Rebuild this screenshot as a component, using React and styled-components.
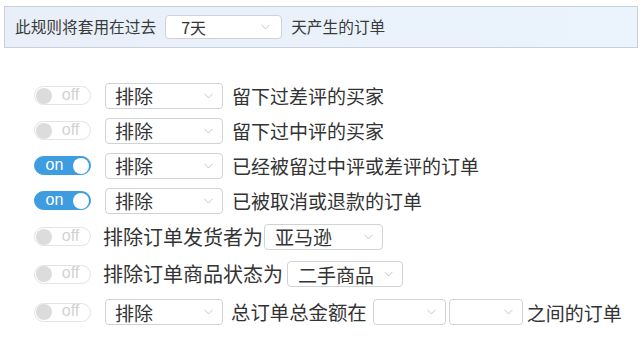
import styled, { createGlobalStyle } from "styled-components";

const GlobalStyle = createGlobalStyle`
  body {
    margin: 0;
    background: #fff;
    font-family: "Noto Sans CJK SC", "Noto Sans", sans-serif;
    color: #333;
  }
`;

const Page = styled.div`
  width: 644px;
  height: 345px;
  padding-top: 6px;
  box-sizing: border-box;
  overflow: hidden;
`;

const Header = styled.div`
  margin-left: 4px;
  width: 634px;
  height: 42px;
  box-sizing: border-box;
  border: 1px solid #c9d0d9;
  background: linear-gradient(to right, #e8eff8, #ebf3fc);
  display: flex;
  align-items: center;
  padding-left: 10px;
  font-size: 15.7px;
  color: #3a3a3a;
`;

const HeaderText = styled.span`
  line-height: 1;
`;

const Select = styled.div`
  position: relative;
  width: ${(p) => p.$w}px;
  height: ${(p) => p.$h || 26}px;
  box-sizing: border-box;
  border: 1px solid #cfd3d8;
  border-radius: 4px;
  background: #fff;
  display: flex;
  align-items: center;
  padding-left: ${(p) => p.$pl || 9}px;
  margin-left: ${(p) => p.$ml || 0}px;
  margin-right: ${(p) => p.$mr || 0}px;
  font-size: ${(p) => p.$fs || 19}px;
  color: #333;
  flex-shrink: 0;
  line-height: 1;
`;

const Chevron = styled.svg`
  position: absolute;
  right: ${(p) => p.$r || 9}px;
  top: 50%;
  margin-top: -3px;
  width: 9px;
  height: 6px;
`;

const List = styled.div`
  padding-top: 30px;
  padding-left: 34px;
`;

const Row = styled.div`
  height: ${(p) => p.$h}px;
  display: flex;
  align-items: center;
  color: #333;
`;

const Label = styled.span`
  line-height: 1;
  white-space: nowrap;
  font-size: ${(p) => p.$fs || 19}px;
  margin-right: ${(p) => p.$mr || 0}px;
`;

const Toggle = styled.div`
  width: 57px;
  height: 19px;
  box-sizing: border-box;
  border-radius: 10px;
  border: 1px solid ${(p) => (p.$on ? "#3e9de0" : "#e4e4e4")};
  background: ${(p) => (p.$on ? "#3e9de0" : "#fff")};
  display: flex;
  align-items: center;
  flex-direction: ${(p) => (p.$on ? "row-reverse" : "row")};
  padding: 0 1px;
  margin-right: ${(p) => p.$mr}px;
  flex-shrink: 0;
`;

const Knob = styled.div`
  width: 16px;
  height: 16px;
  border-radius: 50%;
  background: ${(p) => (p.$on ? "#fff" : "#dcdcdc")};
`;

const ToggleText = styled.span`
  flex: 1;
  text-align: center;
  font-family: "Liberation Sans", Arial, sans-serif;
  font-size: 16px;
  line-height: 1;
  color: ${(p) => (p.$on ? "#fff" : "#d2d2d2")};
  margin-top: -2px;
`;

const Arrow = ({ r }) => (
  <Chevron $r={r} viewBox="0 0 9 6">
    <path d="M0.5 0.8 L4.5 5 L8.5 0.8" fill="none" stroke="#c4c8cc" strokeWidth="1" />
  </Chevron>
);

const Dropdown = ({ value, w, ml, mr, h, fs, pl, r }) => (
  <Select $w={w} $ml={ml} $mr={mr} $h={h} $fs={fs} $pl={pl}>
    {value}
    <Arrow r={r} />
  </Select>
);

const Switch = ({ on, mr = 14 }) => (
  <Toggle $on={on} $mr={mr}>
    <Knob $on={on} />
    <ToggleText $on={on}>{on ? "on" : "off"}</ToggleText>
  </Toggle>
);

const rules = [
  { on: false, text: "留下过差评的买家", h: 35 },
  { on: false, text: "留下过中评的买家", h: 35 },
  { on: true, text: "已经被留过中评或差评的订单", h: 35 },
  { on: true, text: "已被取消或退款的订单", h: 35 },
];

export default function App() {
  return (
    <Page>
      <GlobalStyle />
      <Header>
        <HeaderText>此规则将套用在过去</HeaderText>
        <Dropdown value="7天" w={117} h={24} fs={16} pl={15} ml={9} mr={9} r={11} />
        <HeaderText>天产生的订单</HeaderText>
      </Header>
      <List>
        {rules.map((r) => (
          <Row key={r.text} $h={r.h}>
            <Switch on={r.on} />
            <Dropdown value="排除" w={118} mr={9} />
            <Label>{r.text}</Label>
          </Row>
        ))}
        <Row $h={37}>
          <Switch on={false} mr={12} />
          <Label $fs={20} $mr={1}>排除订单发货者为</Label>
          <Dropdown value="亚马逊" w={119} pl={10} />
        </Row>
        <Row $h={38}>
          <Switch on={false} mr={12} />
          <Label $fs={20} $mr={4}>排除订单商品状态为</Label>
          <Dropdown value="二手商品" w={116} pl={10} />
        </Row>
        <Row $h={38}>
          <Switch on={false} />
          <Dropdown value="排除" w={118} mr={8} />
          <Label $fs={19.4} $mr={6}>总订单总金额在</Label>
          <Dropdown value="" w={73} mr={3} />
          <Dropdown value="" w={74} mr={4} />
          <Label>之间的订单</Label>
        </Row>
      </List>
    </Page>
  );
}
